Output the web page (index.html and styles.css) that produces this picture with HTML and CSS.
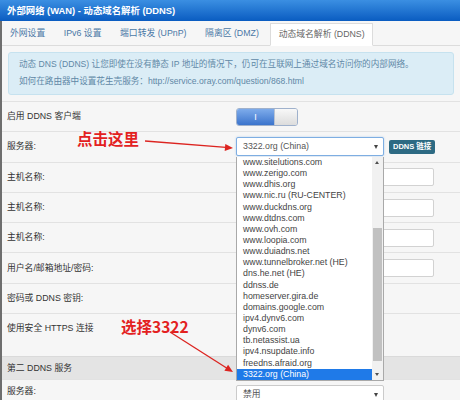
FILE: index.html
```html
<!DOCTYPE html>
<html lang="zh-CN">
<head>
<meta charset="utf-8">
<link rel="stylesheet" href="styles.css">
</head>
<body>
<div class="hdr">外部网络 (WAN) - 动态域名解析 (DDNS)</div>
<div class="main">
  <div class="tabs">
    <span class="tab">外网设置</span>
    <span class="tab">IPv6 设置</span>
    <span class="tab">端口转发 (UPnP)</span>
    <span class="tab">隔离区 (DMZ)</span>
    <span class="tab active">动态域名解析 (DDNS)</span>
  </div>
  <div class="info">
    <p>动态 DNS (DDNS) 让您即使在没有静态 IP 地址的情况下，仍可在互联网上通过域名访问你的内部网络。</p>
    <p>如何在路由器中设置花生壳服务：http://service.oray.com/question/868.html</p>
  </div>
  <div class="form">
    <div class="row">
      <div class="lbl">启用 DDNS 客户端</div>
      <div class="ctl"><span class="switch"><span class="on">I</span><span class="off"></span></span></div>
    </div>
    <div class="row">
      <div class="lbl">服务器:</div>
      <div class="ctl"><div class="select focus">3322.org (China)<span class="caret"></span></div><span class="badge">DDNS 链接</span></div>
    </div>
    <div class="row">
      <div class="lbl">主机名称:</div>
      <div class="ctl"><div class="input"></div></div>
    </div>
    <div class="row">
      <div class="lbl">主机名称:</div>
      <div class="ctl"><div class="input"></div></div>
    </div>
    <div class="row">
      <div class="lbl">主机名称:</div>
      <div class="ctl"><div class="input"></div></div>
    </div>
    <div class="row">
      <div class="lbl">用户名/邮箱地址/密码:</div>
      <div class="ctl"><div class="input"></div></div>
    </div>
    <div class="row">
      <div class="lbl">密码或 DDNS 密钥:</div>
      <div class="ctl"></div>
    </div>
    <div class="row tall">
      <div class="lbl">使用安全 HTTPS 连接</div>
      <div class="ctl"></div>
    </div>
    <div class="section">第二 DDNS 服务</div>
    <div class="row last">
      <div class="lbl">服务器:</div>
      <div class="ctl"><div class="select">禁用<span class="caret"></span></div></div>
    </div>
  </div>
</div>

<div class="dropdown">
  <div class="opts">
    <div class="opt">www.sitelutions.com</div>
    <div class="opt">www.zerigo.com</div>
    <div class="opt">www.dhis.org</div>
    <div class="opt">www.nic.ru (RU-CENTER)</div>
    <div class="opt">www.duckdns.org</div>
    <div class="opt">www.dtdns.com</div>
    <div class="opt">www.ovh.com</div>
    <div class="opt">www.loopia.com</div>
    <div class="opt">www.duiadns.net</div>
    <div class="opt">www.tunnelbroker.net (HE)</div>
    <div class="opt">dns.he.net (HE)</div>
    <div class="opt">ddnss.de</div>
    <div class="opt">homeserver.gira.de</div>
    <div class="opt">domains.google.com</div>
    <div class="opt">ipv4.dynv6.com</div>
    <div class="opt">dynv6.com</div>
    <div class="opt">tb.netassist.ua</div>
    <div class="opt">ipv4.nsupdate.info</div>
    <div class="opt">freedns.afraid.org</div>
    <div class="opt sel">3322.org (China)</div>
  </div>
  <div class="sbar">
    <span class="sup"></span>
    <span class="thumb"></span>
    <span class="sdown"></span>
  </div>
</div>

<div class="note note1">点击这里</div>
<div class="note note2">选择3322</div>
<svg class="arrows" width="460" height="400" viewBox="0 0 460 400">
  <line x1="145" y1="141" x2="226" y2="147.4" stroke="#dc2420" stroke-width="1.3"/>
  <polygon points="233,148 224.7,150.9 225.3,143.9" fill="#dc2420"/>
  <line x1="170" y1="332" x2="227" y2="368.2" stroke="#dc2420" stroke-width="1.3"/>
  <polygon points="233,372 224.4,370.7 228.1,364.8" fill="#dc2420"/>
</svg>
</body>
</html>
```
FILE: styles.css
```css
* { box-sizing: border-box; margin: 0; padding: 0; }
html, body { width: 460px; height: 400px; overflow: hidden; }
body {
  position: relative;
  background: #f6f6f6;
  font-family: "Liberation Sans", "Noto Sans CJK SC", sans-serif;
  font-size: 8.8px;
  color: #333;
}
.hdr {
  height: 21px;
  line-height: 21px;
  padding-left: 7px;
  background: linear-gradient(#3b8fe2, #0a5cc1);
  color: #fff;
  font-weight: bold;
  font-size: 9.4px;
}
.main { border-left: 2px solid #6e6e6e; min-height: 379px; }
.tabs {
  display: flex;
  align-items: flex-end;
  height: 25px;
  border-bottom: 1px solid #dcdcdc;
}
.tab {
  height: 22px;
  line-height: 21px;
  padding: 0 9.3px;
  color: #4a78a6;
  white-space: nowrap;
}
.tab:first-child { padding-left: 8px; }
.tab.active {
  background: #fff;
  border: 1px solid #dcdcdc;
  border-bottom-color: #fff;
  margin-bottom: -1px;
  height: 23px;
  padding: 0 7.5px;
  color: #666;
  margin-left: 2px;
}
.info {
  margin: 6px 6px 0 6px;
  height: 43px;
  padding: 3px 10px 4px;
  background: #dbedf6;
  border: 1px solid #c6e2ef;
  border-radius: 3px;
  color: #5f88a6;
  font-size: 8.6px;
  line-height: 17px;
  white-space: nowrap;
}
.form { margin-top: 6px; }
.row {
  display: grid;
  grid-template-columns: 234px 1fr;
  align-items: center;
  height: 30.3px;
  border-top: 1px solid #e2e2e2;
}
.row.tall { height: 43px; align-items: start; padding-top: 7.5px; }
.row.last { align-items: start; padding-top: 5px; }
.lbl { padding-left: 5px; white-space: nowrap; color: #333; line-height: 13px; }
.ctl { display: flex; align-items: center; }
.switch {
  display: flex;
  width: 62px;
  height: 18px;
  border: 1px solid #9fb1cc;
  border-radius: 3px;
  overflow: hidden;
}
.switch .on {
  width: 37px;
  background: linear-gradient(#7eaceb, #3b74cc);
  color: #fff;
  text-align: center;
  line-height: 16px;
  font-size: 9px;
}
.switch .off { flex: 1; background: linear-gradient(#f8f8f8, #dcdcdc); border-left: 1px solid #b9c3d2; }
.select {
  position: relative;
  width: 148px;
  height: 19px;
  line-height: 17px;
  padding-left: 6px;
  background: #fff;
  border: 1px solid #cbcbcb;
  border-radius: 2px;
  color: #555;
}
.select.focus { border-color: #7eaee2; box-shadow: 0 0 2px rgba(102, 160, 230, 0.5); }
.caret {
  position: absolute;
  right: 5px;
  top: 7px;
  border-left: 2.5px solid transparent;
  border-right: 2.5px solid transparent;
  border-top: 4px solid #444;
}
.badge {
  margin-left: 5px;
  height: 14px;
  line-height: 14px;
  padding: 0 4px;
  background: #2d6a83;
  color: #fff;
  font-weight: bold;
  font-size: 7.5px;
  border-radius: 2px;
  white-space: nowrap;
}
.input {
  width: 198px;
  height: 18px;
  background: #fff;
  border: 1px solid #d2d2d2;
  border-radius: 2px;
}
.section {
  height: 23px;
  line-height: 23px;
  padding-left: 5px;
  background: #e4e4e4;
  border-top: 1px solid #dadada;
  color: #333;
}
.dropdown {
  position: absolute;
  left: 236px;
  top: 157px;
  width: 148px;
  background: #fff;
  border: 1px solid #a9a9a9;
  border-top: none;
  display: flex;
}
.opts { flex: 1; }
.opt {
  height: 11.15px;
  line-height: 11.15px;
  padding-left: 6px;
  color: #444;
  white-space: nowrap;
  font-size: 8.8px;
}
.opt.sel { background: #1f7ae8; color: #fff; }
.sbar { position: relative; width: 11px; background: #f1f1f1; }
.thumb {
  position: absolute;
  left: 1px;
  right: 1px;
  top: 71px;
  height: 133px;
  background: #c1c1c1;
}
.sup, .sdown {
  position: absolute;
  left: 3px;
  border-left: 2.5px solid transparent;
  border-right: 2.5px solid transparent;
}
.sup { top: 4px; border-bottom: 3.5px solid #505050; }
.sdown { bottom: 4px; border-top: 3.5px solid #505050; }
.note {
  position: absolute;
  color: #e3211f;
  font-family: "Noto Sans CJK SC", sans-serif;
  font-weight: bold;
  font-size: 15.5px;
  line-height: 16px;
  white-space: nowrap;
}
.note1 { left: 77px; top: 130px; }
.note2 { left: 121px; top: 318px; }
.arrows { position: absolute; left: 0; top: 0; pointer-events: none; }
```
